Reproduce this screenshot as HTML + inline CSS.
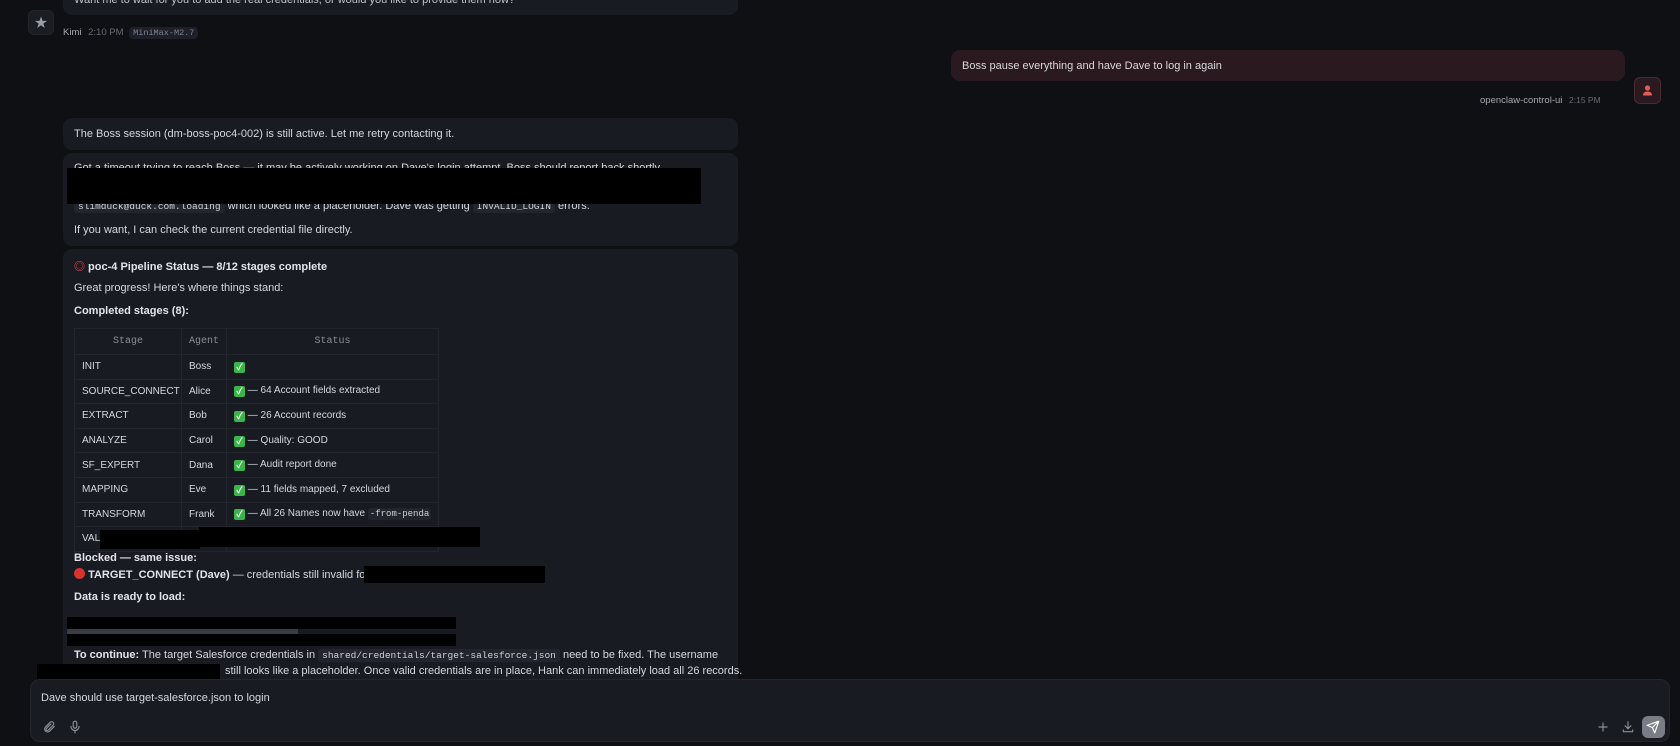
<!DOCTYPE html>
<html><head><meta charset="utf-8"><style>
*{box-sizing:border-box;margin:0;padding:0}
body{width:1680px;height:746px;background:#0e1014;overflow:hidden;position:relative;font-family:"Liberation Sans","Noto Sans CJK SC",sans-serif;color:#d6d8dd;font-size:11px}
.a{position:absolute}
.bub{position:absolute;background:#181b22;border-radius:9px;left:63px;width:675px}
.t{position:absolute;left:11px;white-space:nowrap}
code,.mono{font-family:"Liberation Mono",monospace;font-size:9.5px}
code{background:#22252d;padding:1px 4px;border-radius:3px;color:#cfd2d8}
.blk{position:absolute;background:#000}
table{border-collapse:collapse;position:absolute;left:11px;top:79px;table-layout:fixed;width:364px}
td,th{border:1px solid #22252c;height:24.6px;padding:0 7px;font-size:10px;font-weight:normal;text-align:left;white-space:nowrap;overflow:hidden}
td code{font-size:9px;padding:1px 2px}
th{font-family:"Liberation Mono",monospace;color:#8a8e96;text-align:center;height:26px;font-size:10px}
.ck{display:inline-block;width:11px;height:11px;background:#3bb54a;border-radius:2px;color:#fff;font-size:9px;line-height:11px;text-align:center;font-weight:bold;vertical-align:-1px}
b{font-weight:bold;color:#e3e5e9}
</style></head><body>
<div class="bub" style="top:-20px;height:35px"><div class="t" style="top:14px;color:#bfc2c8">Want me to wait for you to add the real credentials, or would you like to provide them now?</div></div>
<div class="a" style="left:28px;top:10px;width:26px;height:25px;background:#1a1d24;border-radius:6px;border:1px solid #22252c;color:#9a9ea6;text-align:center;line-height:23px;font-size:13px">★</div>
<div class="a" style="left:63px;top:27px;font-size:9.5px;color:#a6a9b0">Kimi <span style="color:#666a72;margin-left:4px">2:10 PM</span> <span class="mono" style="font-size:8.5px;background:#1c2029;color:#7d8290;padding:1px 4px;border-radius:4px;margin-left:3px">MiniMax-M2.7</span></div>

<div class="a" style="left:951px;top:50px;width:674px;height:31px;background:#2a191e;border-radius:9px"><div class="t" style="top:10px;color:#d8d9dc">Boss pause everything and have Dave to log in again</div></div>
<div class="a" style="left:1634px;top:77px;width:27px;height:27px;background:#2a191e;border:1px solid #4a2b31;border-radius:6px"><svg width="25" height="25" viewBox="0 0 25 25"><circle cx="12.5" cy="10" r="2.6" fill="#e55a5a"/><path d="M8 17.5 Q8 13.5 12.5 13.5 Q17 13.5 17 17.5Z" fill="#e55a5a"/></svg></div>
<div class="a" style="left:1480px;top:95px;font-size:9.5px;color:#a6a9b0">openclaw-control-ui <span style="color:#666a72;margin-left:4px;font-size:8.5px">2:15 PM</span></div>

<div class="bub" style="top:118px;height:32px"><div class="t" style="top:10px">The Boss session (dm-boss-poc4-002) is still active. Let me retry contacting it.</div></div>

<div class="bub" style="top:153px;height:93px">
<div class="t" style="top:9px">Got a timeout trying to reach Boss — it may be actively working on Dave's login attempt. Boss should report back shortly.</div>
<div class="t" style="top:47px"><code>slimduck@duck.com.loading</code> which looked like a placeholder. Dave was getting <code>INVALID_LOGIN</code> errors.</div>
<div class="t" style="top:71px">If you want, I can check the current credential file directly.</div>
</div>
<div class="blk" style="left:67px;top:168px;width:634px;height:36px"></div>

<div class="bub" style="top:249px;height:460px">
<div class="t" style="top:9px"><b><span style="color:#e04848">◎</span> poc-4 Pipeline Status — 8/12 stages complete</b></div>
<div class="t" style="top:33px">Great progress! Here's where things stand:</div>
<div class="t" style="top:56px"><b>Completed stages (8):</b></div>
<table>
<colgroup><col style="width:107px"><col style="width:45px"><col style="width:212px"></colgroup>
<tr><th>Stage</th><th>Agent</th><th>Status</th></tr>
<tr><td>INIT</td><td>Boss</td><td><span class="ck">✓</span></td></tr>
<tr><td>SOURCE_CONNECT</td><td>Alice</td><td><span class="ck">✓</span> — 64 Account fields extracted</td></tr>
<tr><td>EXTRACT</td><td>Bob</td><td><span class="ck">✓</span> — 26 Account records</td></tr>
<tr><td>ANALYZE</td><td>Carol</td><td><span class="ck">✓</span> — Quality: GOOD</td></tr>
<tr><td>SF_EXPERT</td><td>Dana</td><td><span class="ck">✓</span> — Audit report done</td></tr>
<tr><td>MAPPING</td><td>Eve</td><td><span class="ck">✓</span> — 11 fields mapped, 7 excluded</td></tr>
<tr><td>TRANSFORM</td><td>Frank</td><td><span class="ck">✓</span> — All 26 Names now have <code>-from-penda</code></td></tr>
<tr><td>VAL</td><td></td><td></td></tr>
</table>
<div class="t" style="top:303px"><b>Blocked — same issue:</b></div>
<div class="t" style="top:319px"><span style="display:inline-block;width:11px;height:11px;border-radius:50%;background:#d8332f;vertical-align:-1px"></span> <b>TARGET_CONNECT (Dave)</b> — credentials still invalid for</div>
<div class="t" style="top:342px"><b>Data is ready to load:</b></div>
<div class="t" style="top:400px"><b>To continue:</b> The target Salesforce credentials in <code>shared/credentials/target-salesforce.json</code> need to be fixed. The username</div>
<div class="t" style="top:416px;left:162px">still looks like a placeholder. Once valid credentials are in place, Hank can immediately load all 26 records.</div>
</div>
<div class="blk" style="left:100px;top:530px;width:100px;height:19px"></div>
<div class="blk" style="left:199px;top:527px;width:281px;height:20px"></div>
<div class="blk" style="left:364px;top:566px;width:181px;height:17px"></div>
<div class="blk" style="left:67px;top:617px;width:389px;height:12px"></div>
<div class="a" style="left:67px;top:629px;width:231px;height:5px;background:#3a3d44"></div>
<div class="blk" style="left:67px;top:634px;width:389px;height:12px"></div>
<div class="blk" style="left:37px;top:664px;width:183px;height:17px"></div>

<div class="a" style="left:30px;top:679px;width:1640px;height:63px;background:#181b22;border:1px solid #23262d;border-radius:10px">
<div class="t" style="left:10px;top:12px;color:#d6d8dd">Dave should use target-salesforce.json to login</div>
<svg class="a" style="left:11px;top:40px" width="14" height="14" viewBox="0 0 24 24" fill="none" stroke="#8a8e96" stroke-width="2" stroke-linecap="round"><path d="M21 11l-8.5 8.5a5 5 0 01-7-7L14 4a3.5 3.5 0 015 5l-8.5 8.5a2 2 0 01-3-3L15 7"/></svg>
<svg class="a" style="left:37px;top:40px" width="14" height="14" viewBox="0 0 24 24" fill="none" stroke="#8a8e96" stroke-width="2" stroke-linecap="round"><rect x="9" y="2" width="6" height="12" rx="3"/><path d="M5 11a7 7 0 0014 0M12 18v4"/></svg>
<svg class="a" style="left:1565px;top:40px" width="14" height="14" viewBox="0 0 24 24" fill="none" stroke="#8a8e96" stroke-width="2" stroke-linecap="round"><path d="M12 5v14M5 12h14"/></svg>
<svg class="a" style="left:1590px;top:40px" width="14" height="14" viewBox="0 0 24 24" fill="none" stroke="#8a8e96" stroke-width="2" stroke-linecap="round"><path d="M12 3v12M7 10l5 5 5-5M4 17v3h16v-3"/></svg>
<div class="a" style="left:1611px;top:36px;width:23px;height:22px;background:#7a7d85;border-radius:6px"><svg style="position:absolute;left:4px;top:4px" width="14" height="14" viewBox="0 0 24 24" fill="none" stroke="#fff" stroke-width="2" stroke-linejoin="round"><path d="M22 2L11 13M22 2l-7 20-4-9-9-4z"/></svg></div>
</div>
</body></html>
